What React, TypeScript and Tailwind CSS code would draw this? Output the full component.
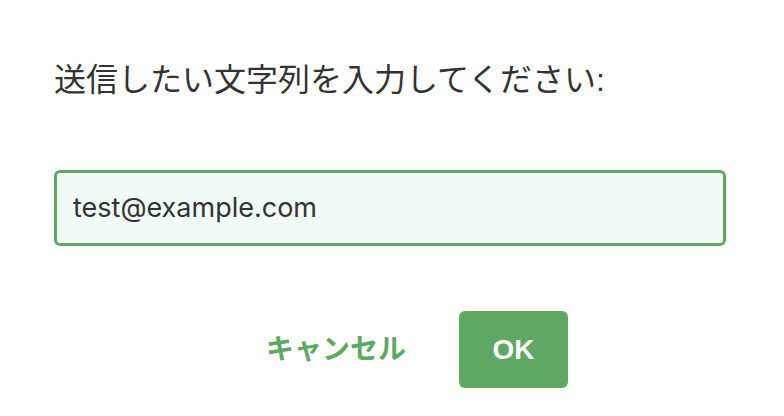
export default function App() {
  return (
    <div className="w-[784px] h-[416px] bg-white" style={{ fontFamily: '"Liberation Sans", "Noto Sans CJK JP", sans-serif' }}>
      <div className="pl-[54px] pr-[58px] pt-[56px]">
        <div className="text-[32px] leading-[48px] text-[#333333]">送信したい文字列を入力してください:</div>
        <div className="mt-[66px] h-[76px] rounded-[6px] border-[3px] border-[#5fa864] bg-[#f1faf6] flex items-center pl-[16px]">
          <span className="text-[27px] text-[#333333]" style={{ fontFamily: 'Inter, "Noto Sans", sans-serif' }}>test@example.com</span>
        </div>
        <div className="mt-[65px] flex items-center gap-[53px] pl-[212px]">
          <button className="text-[28px] font-bold text-[#5fa864]">キャンセル</button>
          <button className="w-[109px] h-[77px] rounded-[6px] bg-[#5fa864] text-white text-[28px] font-bold">OK</button>
        </div>
      </div>
    </div>
  );
}
